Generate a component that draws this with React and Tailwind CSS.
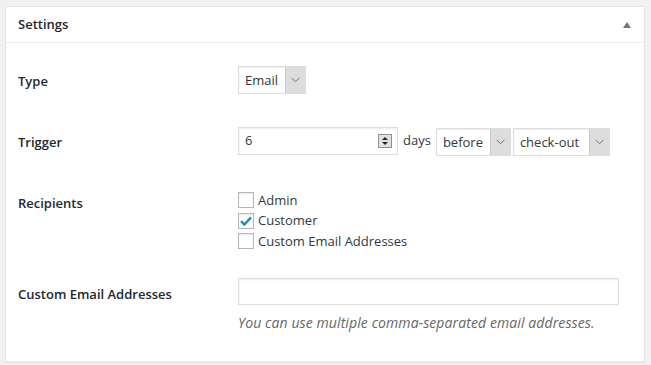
// App.jsx
function Chevron() {
  return (
    <svg width="9" height="6" viewBox="0 0 9 6" className="block">
      <path d="M0.5 0.8 L4.5 4.8 L8.5 0.8" fill="none" stroke="#6f6f6f" strokeWidth="1" />
    </svg>
  );
}

function Select({ value, width }) {
  return (
    <div className={`flex h-[28px] border border-[#ddd] bg-white shadow-[inset_0_1px_2px_rgba(0,0,0,0.07)] ${width}`}>
      <span className="flex-1 pl-[6px] leading-[26px] text-[#32373c]">{value}</span>
      <span className="flex w-[20px] items-center justify-center border-l border-[#c9c9c9] bg-[#dddddd]">
        <Chevron />
      </span>
    </div>
  );
}

function Checkbox({ checked, label }) {
  return (
    <label className="flex h-[20.5px] items-center gap-[4px]">
      <span className="flex h-[16px] w-[16px] items-center justify-center border border-[#b4b9be] bg-white shadow-[inset_0_1px_2px_rgba(0,0,0,0.1)]">
        {checked && (
          <svg width="14" height="14" viewBox="0 0 14 14">
            <path d="M2 7.2 L5.4 10.6 L12 3.4" fill="none" stroke="#1e8cbe" strokeWidth="2.4" />
          </svg>
        )}
      </span>
      <span className="text-[#32373c]">{label}</span>
    </label>
  );
}

export default function App() {
  return (
    <div className="min-h-screen bg-[#f1f1f1] pt-[6px] pl-[5px] pr-[6px] text-[13px] text-[#23282d] [font-family:'Open_Sans',sans-serif]">
      <div className="border border-[#e5e5e5] bg-white shadow-[0_1px_1px_rgba(0,0,0,0.04)]">
        <div className="flex h-[36px] items-center justify-between border-b border-[#eee] px-[12px]">
          <h2 className="text-[13px] font-semibold">Settings</h2>
          <svg width="8" height="6" viewBox="0 0 8 6" className="mr-[1px]">
            <path d="M4 0 L8 6 L0 6 Z" fill="#72777c" />
          </svg>
        </div>

        <div className="px-[12px] pt-[23px] pb-[28px]">
          <div className="flex">
            <div className="mt-[5px] w-[220px] font-semibold leading-[20px]">Type</div>
            <Select value="Email" width="w-[68px]" />
          </div>

          <div className="mt-[32px] flex">
            <div className="mt-[6px] w-[220px] font-semibold leading-[20px]">Trigger</div>
            <div className="flex items-center">
              <div className="flex h-[28px] w-[160px] items-center border border-[#ddd] bg-white pl-[6px] pr-[5px] shadow-[inset_0_1px_2px_rgba(0,0,0,0.07)]">
                <span className="flex-1 text-[#32373c]">6</span>
                <span className="flex h-[14px] w-[14px] flex-col items-center justify-center gap-[2px] border border-[#8f8f8f] bg-[#e1e1e1]">
                  <svg width="6" height="3" viewBox="0 0 6 3"><path d="M3 0 L6 3 L0 3 Z" fill="#222" /></svg>
                  <svg width="6" height="3" viewBox="0 0 6 3"><path d="M0 0 L6 0 L3 3 Z" fill="#222" /></svg>
                </span>
              </div>
              <span className="ml-[5px] mr-[5px] text-[#32373c]">days</span>
              <div className="flex gap-[2px] pt-[2px]">
                <Select value="before" width="w-[75px]" />
                <Select value="check-out" width="w-[97px]" />
              </div>
            </div>
          </div>

          <div className="mt-[34px] flex">
            <div className="mt-[3px] w-[220px] font-semibold leading-[20px]">Recipients</div>
            <div className="flex flex-col">
              <Checkbox label="Admin" />
              <Checkbox checked label="Customer" />
              <Checkbox label="Custom Email Addresses" />
            </div>
          </div>

          <div className="mt-[26px] flex">
            <div className="mt-[6px] w-[220px] font-semibold leading-[20px]">Custom Email Addresses</div>
            <div className="flex flex-col">
              <input
                type="text"
                className="h-[27px] w-[381px] border border-[#ddd] bg-white shadow-[inset_0_1px_2px_rgba(0,0,0,0.07)] outline-none"
              />
              <p className="mt-[8px] text-[14px] leading-[20px] tracking-[0.1px] italic text-[#666]">
                You can use multiple comma-separated email addresses.
              </p>
            </div>
          </div>
        </div>
      </div>
    </div>
  );
}
